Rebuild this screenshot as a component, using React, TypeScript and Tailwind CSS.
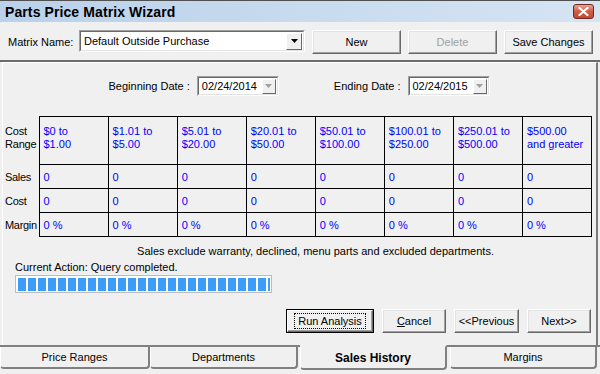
import React from "react";
import clsx from "clsx";

const ranges = [
  ["$0 to", "$1.00"],
  ["$1.01 to", "$5.00"],
  ["$5.01 to", "$20.00"],
  ["$20.01 to", "$50.00"],
  ["$50.01 to", "$100.00"],
  ["$100.01 to", "$250.00"],
  ["$250.01 to", "$500.00"],
  ["$500.00", "and greater"],
];

function WinButton({
  children,
  className,
  disabled,
  focused,
}: {
  children: React.ReactNode;
  className?: string;
  disabled?: boolean;
  focused?: boolean;
}) {
  if (focused) {
    return (
      <div className={clsx("h-6 border border-black bg-[#f0f0f0]", className)}>
        <div className="flex h-full items-center justify-center border border-t-white border-l-white border-r-[#696969] border-b-[#696969] shadow-[inset_-1px_-1px_0_#a0a0a0]">
          <span className="border border-dotted border-black px-[3px] leading-[14px]">{children}</span>
        </div>
      </div>
    );
  }
  return (
    <div
      className={clsx(
        "flex h-6 items-center justify-center border border-t-white border-l-white border-r-[#696969] border-b-[#696969] bg-[#f0f0f0] shadow-[inset_-1px_-1px_0_#a0a0a0,inset_1px_1px_0_#e3e3e3]",
        disabled ? "text-[#a0a0a0]" : "text-black",
        className
      )}
    >
      {children}
    </div>
  );
}

function DateBox({ value }: { value: string }) {
  return (
    <div className="flex h-5 w-[82px] items-center border border-t-[#a0a0a0] border-l-[#a0a0a0] border-r-white border-b-white bg-white">
      <div className="flex h-full flex-1 items-center border border-t-[#696969] border-l-[#696969] border-r-[#e3e3e3] border-b-[#e3e3e3] pl-[3px]">
        <span className="flex-1 whitespace-nowrap">{value}</span>
        <div className="mr-[1px] flex h-[15px] w-[14px] shrink-0 items-center justify-center border border-t-white border-l-white border-r-[#696969] border-b-[#696969] bg-[#f0f0f0]">
          <svg width="7" height="4" viewBox="0 0 7 4">
            <path d="M0 0h7L3.5 4z" fill="#a0a0a0" />
          </svg>
        </div>
      </div>
    </div>
  );
}

function Tab({ label, selected, className }: { label: string; selected?: boolean; className?: string }) {
  return (
    <div
      className={clsx(
        "flex items-center justify-center rounded-b-[4px] border-l border-l-white border-r-2 border-b-2 border-r-[#808080] border-b-[#808080] bg-[#f0f0f0]",
        selected ? "-mt-[2px] h-[25px] text-[12px] font-bold" : "h-[22px] border-t-0",
        className
      )}
    >
      {label}
    </div>
  );
}

export default function App() {
  return (
    <div className="flex h-[374px] w-[600px] flex-col overflow-hidden bg-[#f0f0f0] font-['Liberation_Sans',Arial,sans-serif] text-[11px] text-black">
      {/* title bar */}
      <div className="flex h-[22px] shrink-0 items-center justify-between border-t border-[#505050] bg-gradient-to-r from-[#b9d1ea] to-[#d6e4f3] pl-[5px] pr-[6px]">
        <span className="text-[14px] font-bold leading-none tracking-[0.1px]">Parts Price Matrix Wizard</span>
        <div className="flex h-[15px] w-[21px] items-center justify-center rounded-[3px] border border-[#6e2a22] bg-gradient-to-b from-[#e8a493] via-[#cf5b43] to-[#c24a31]">
          <svg width="11" height="9" viewBox="0 0 11 9">
            <path d="M1.5 1l8 7M9.5 1l-8 7" stroke="white" strokeWidth="2.2" strokeLinecap="round" />
          </svg>
        </div>
      </div>

      {/* matrix name row */}
      <div className="flex h-[40px] shrink-0 items-start border-b-2 border-[#6d6d6d] pt-[8px]">
        <span className="ml-[8px] mt-[4px] w-[71px] whitespace-nowrap">Matrix Name:</span>
        <div className="flex h-[22px] w-[226px] items-center border border-t-[#a0a0a0] border-l-[#a0a0a0] border-r-white border-b-white bg-white">
          <div className="flex h-full flex-1 items-center border border-t-[#696969] border-l-[#696969] border-r-[#e3e3e3] border-b-[#e3e3e3] pl-[3px]">
            <span className="flex-1">Default Outside Purchase</span>
            <div className="mr-[1px] flex h-[17px] w-[16px] items-center justify-center border border-t-white border-l-white border-r-[#696969] border-b-[#696969] bg-[#f0f0f0]">
              <svg width="7" height="4" viewBox="0 0 7 4">
                <path d="M0 0h7L3.5 4z" fill="black" />
              </svg>
            </div>
          </div>
        </div>
        <div className="ml-[7px] flex gap-[7px]">
          <WinButton className="w-[89px]">New</WinButton>
          <WinButton className="w-[89px]" disabled>
            Delete
          </WinButton>
          <WinButton className="w-[89px]">Save Changes</WinButton>
        </div>
      </div>

      {/* main panel */}
      <div className="ml-[2px] mr-[2px] flex flex-1 flex-col border-t border-l border-t-white border-l-white border-r-2 border-r-[#7a7a7a] pl-[2px] pr-[3px] leading-[14px]">
        <div className="flex justify-center gap-[55px] pt-[13px]">
          <div className="flex items-center gap-[7px]">
            <span>Beginning Date :</span>
            <DateBox value="02/24/2014" />
          </div>
          <div className="flex items-center gap-[7px]">
            <span>Ending Date :</span>
            <DateBox value="02/24/2015" />
          </div>
        </div>

        <table className="mt-[20px] w-[587px] table-fixed border-collapse">
          <colgroup>
            <col className="w-[34px]" />
            {ranges.map((_, i) => (
              <col key={i} />
            ))}
          </colgroup>
          <tbody>
            <tr className="h-[48px]">
              <td className="pb-[6px] align-middle leading-[13px] tracking-[-0.2px]">
                Cost
                <br />
                Range
              </td>
              {ranges.map(([a, b], i) => (
                <td key={i} className="whitespace-nowrap border border-black pb-[6px] pl-[4px] align-middle leading-[13px] text-[#0000ff]">
                  {a}
                  <br />
                  {b}
                </td>
              ))}
            </tr>
            {["Sales", "Cost", "Margin"].map((row) => (
              <tr key={row} className="h-[24px]">
                <td className="whitespace-nowrap align-middle tracking-[-0.3px]">{row}</td>
                {ranges.map((_, i) => (
                  <td key={i} className="border border-black pl-[4px] align-middle text-[#0000ff]">
                    {row === "Margin" ? "0 %" : "0"}
                  </td>
                ))}
              </tr>
            ))}
          </tbody>
        </table>

        <div className="ml-[34px] mt-[7px] w-[553px] text-center">
          Sales exclude warranty, declined, menu parts and excluded departments.
        </div>
        <div className="ml-[10px] mt-[2px]">Current Action: Query completed.</div>
        <div className="ml-[10px] mt-[1px] flex h-[18px] w-[257px] items-center border border-[#bcbcbc] bg-white pl-[2px]">
          <div className="flex h-[13px] gap-[2px]">
            {Array.from({ length: 25 }).map((_, i) => (
              <div key={i} className="h-full w-[8px] bg-[#3c9cf8]" />
            ))}
            <div className="h-full w-[2px] bg-[#3c9cf8]" />
          </div>
        </div>

        <div className="mt-[16px] flex justify-end gap-[8px] pr-[2px]">
          <WinButton className="w-[88px]" focused>
            Run Analysis
          </WinButton>
          <WinButton className="w-[64px]">
            <span>
              <span className="underline">C</span>ancel
            </span>
          </WinButton>
          <WinButton className="w-[65px]">&lt;&lt;Previous</WinButton>
          <WinButton className="w-[64px]">Next&gt;&gt;</WinButton>
        </div>
      </div>

      {/* tabs */}
      <div className="flex h-[29px] shrink-0 items-start border-t-2 border-[#808080]">
        <Tab label="Price Ranges" className="w-[150px]" />
        <Tab label="Departments" className="w-[148px]" />
        <Tab label="Sales History" selected className="ml-[2px] w-[147px] border-t-2 border-t-[#f0f0f0]" />
        <Tab label="Margins" className="ml-[3px] w-[147px]" />
      </div>
    </div>
  );
}
